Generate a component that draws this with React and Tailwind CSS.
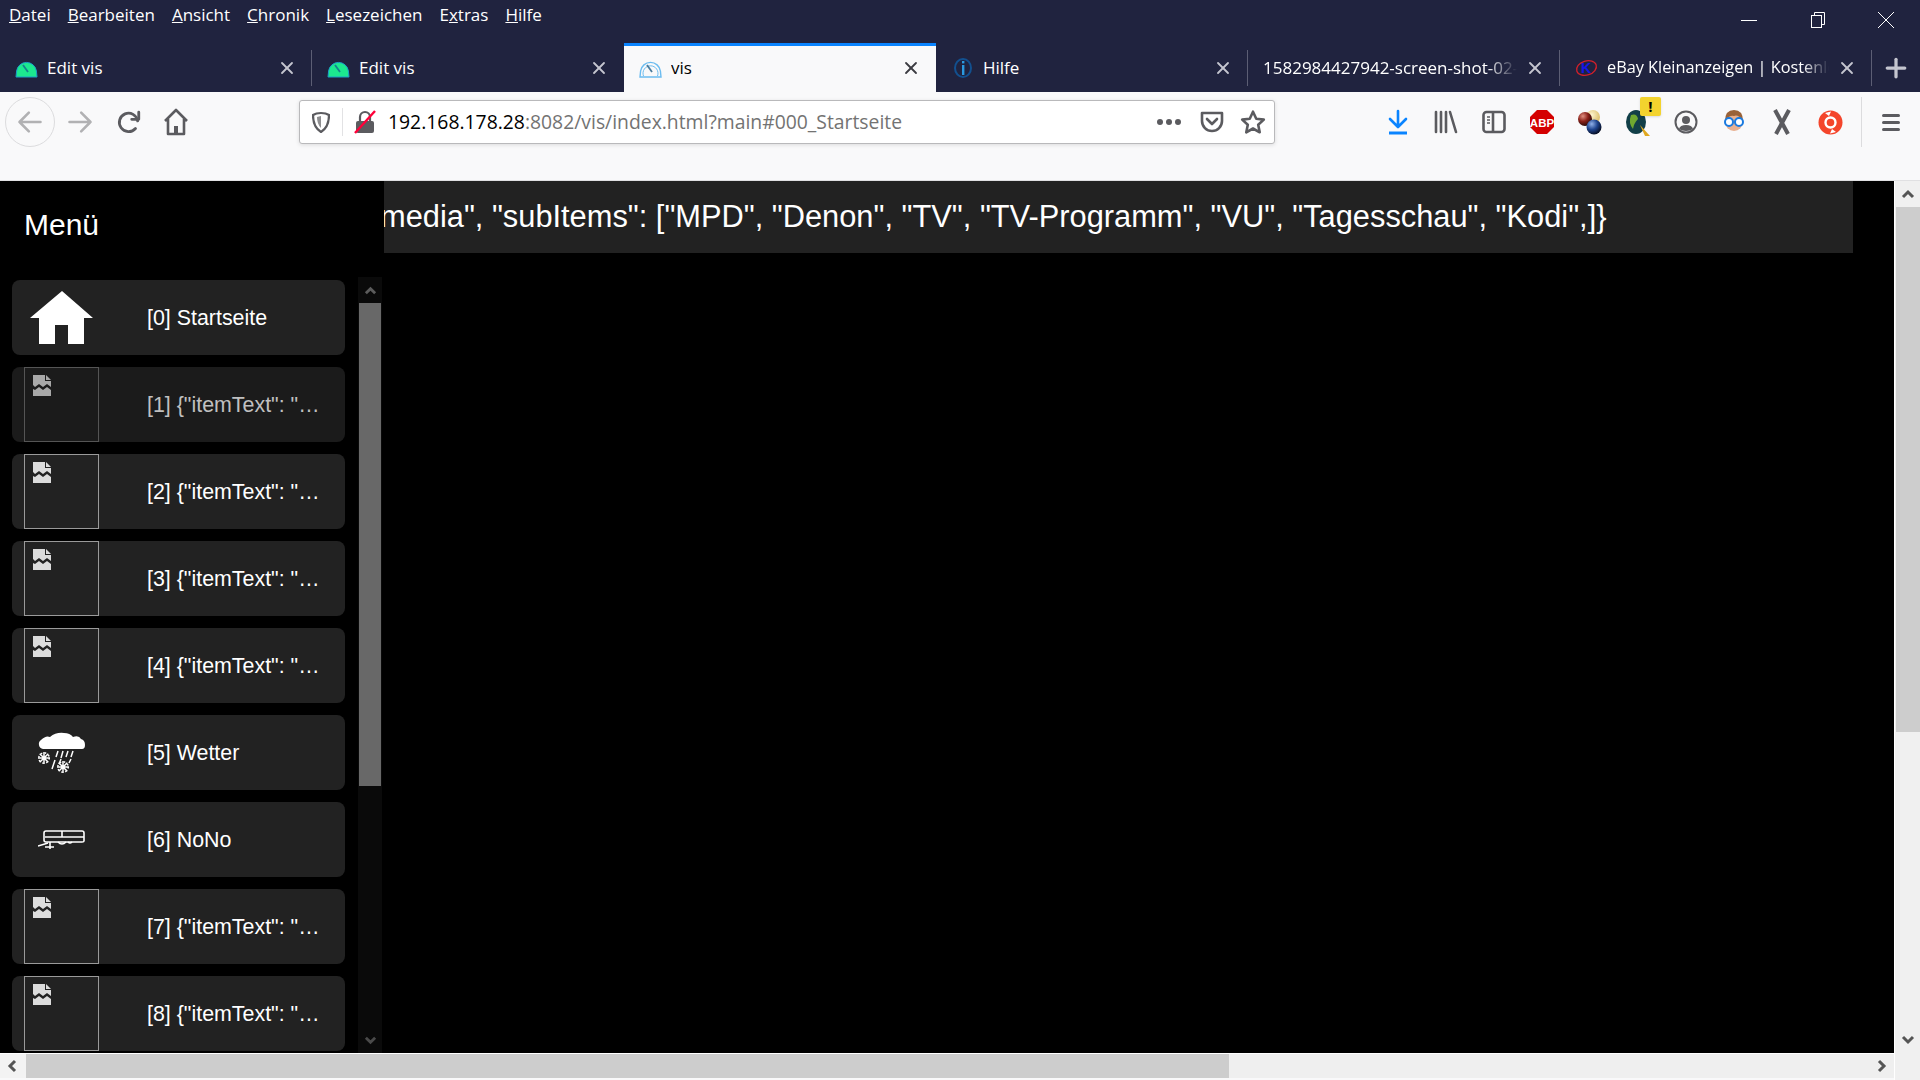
import { X, Plus } from 'lucide-react';

const uiFont = 'font-["Open_Sans",sans-serif]';
const pageFont = 'font-["Liberation_Sans",Arial,sans-serif]';

const menuItems = [
    ['D', 'atei', ''],
    ['B', 'earbeiten', ''],
    ['A', 'nsicht', ''],
    ['C', 'hronik', ''],
    ['L', 'esezeichen', ''],
    ['E', 'xtras', 'x'],
    ['H', 'ilfe', ''],
];

const Gauge = ({ color = '#1ce88f', line = '#1b9fc8', outline = false }) => (
    <svg width="23" height="20" viewBox="0 0 23 20">
        <path
            d="M1 19 L1.6 13 A10 10 0 0 1 21.4 13 L22 19 Z"
            fill={outline ? 'none' : color}
            stroke={outline ? color : line}
            strokeWidth={outline ? 1.4 : 1}
        />
        {outline && <path d="M4.5 18 A7.5 7.5 0 1 1 18.5 18" fill="none" stroke={color} strokeWidth="1" />}
        <path d="M8 7 L13 14" stroke={outline ? '#4a7a9a' : '#16808f'} strokeWidth="1.8" />
    </svg>
);

const InfoFavicon = () => (
    <svg width="20" height="22" viewBox="0 0 20 22">
        <ellipse cx="10" cy="11" rx="8" ry="9" fill="none" stroke="#12508f" strokeWidth="2" />
        <rect x="9" y="8" width="2.4" height="10" fill="#2a9ae0" />
        <rect x="9" y="4" width="2.4" height="2.4" fill="#2a9ae0" />
    </svg>
);

const EbayFavicon = () => (
    <svg width="26" height="24" viewBox="0 0 26 24">
        <ellipse cx="13" cy="12" rx="11.5" ry="8" transform="rotate(-18 13 12)" fill="none" stroke="#d3202a" strokeWidth="1.5" />
        <text x="12.5" y="18" textAnchor="middle" fontSize="16" fontWeight="700" fontFamily="Liberation Sans" fill="#1616e6">K</text>
    </svg>
);

const tabs = [
    { title: 'Edit vis', icon: <Gauge />, sep: true },
    { title: 'Edit vis', icon: <Gauge />, sep: false },
    { title: 'vis', icon: <Gauge outline color="#6bbcf0" />, active: true, sep: false },
    { title: 'Hilfe', icon: <InfoFavicon />, sep: true },
    { title: '1582984427942-screen-shot-02-29-at-16', sep: true, fade: true },
    { title: 'eBay Kleinanzeigen | Kostenlos', icon: <EbayFavicon />, sep: true, fade: true, small: true },
];

const Tab = ({ title, icon, active, sep, fade, small }) => (
    <div
        className={`relative flex h-[49px] w-[312px] shrink-0 items-center pl-[15px] pr-[15px] ${
            active ? 'border-t-[3px] border-[#0a84ff] bg-[#f9f9fa] pb-[3px] text-black' : 'text-white'
        }`}
    >
        {icon && <div className="mr-[9px] flex w-[23px] shrink-0 justify-center">{icon}</div>}
        <div
            className={`min-w-0 flex-1 overflow-hidden whitespace-nowrap ${small ? 'text-[16.3px]' : 'text-[17px]'} ${
                fade ? '[mask-image:linear-gradient(to_right,black_88%,transparent)]' : ''
            }`}
        >
            {title}
        </div>
        <X size={20} strokeWidth={2.2} className={`ml-2 shrink-0 ${active ? 'text-[#3c3c42]' : 'text-[#c4c5cf]'}`} />
        {sep && <div className="absolute right-0 top-[7px] h-[36px] w-px bg-[#5c5e74]" />}
    </div>
);

const Stroke = ({ children, size = 24, box = 24, color = '#5b5b5f', width = 2 }) => (
    <svg width={size} height={size} viewBox={`0 0 ${box} ${box}`} fill="none" stroke={color} strokeWidth={width} strokeLinecap="round" strokeLinejoin="round">
        {children}
    </svg>
);

const ToolSlot = ({ children }) => <div className="flex h-[50px] w-12 items-center justify-center">{children}</div>;

const BrokenImage = ({ dim }) => (
    <svg width="19" height="22" viewBox="0 0 19 22" className="absolute left-[8px] top-[7px]" fill={dim ? '#a8a8a8' : '#dcdcdc'}>
        <path d="M0 0 H12 V6 H18 V12 L14 9 L10 12 L6 9 L2 12 L0 10 Z" />
        <path d="M13 0 L18 5 H13 Z" />
        <path d="M0 14 L2 15 L6 12 L10 15 L14 12 L18 15 V21 H0 Z" />
    </svg>
);

const HouseIcon = () => (
    <svg width="64" height="54" viewBox="0 0 64 54">
        <path d="M32 0 L63 27 H54 V53 H38 V34 H25 V53 H9 V27 H0 Z" fill="white" />
    </svg>
);

const Snowflake = ({ x, y }) => (
    <g transform={`translate(${x} ${y})`}>
        <path d="M-6 0 H6 M0 -6 V6 M-4.3 -4.3 L4.3 4.3 M-4.3 4.3 L4.3 -4.3" />
        <circle r="5.2" strokeDasharray="1.6 2.5" />
    </g>
);

const WeatherIcon = () => (
    <svg width="48" height="42" viewBox="0 0 48 42" fill="white">
        <path d="M5 17 A5 5 0 0 1 3 8 Q8 3 12 5 Q18 0 26 1 Q32 1 35 5 Q41 3 43 7 Q47 8 47 13 Q47 17 44 17 Z" />
        <g stroke="white" strokeWidth="1.5" fill="none">
            <path d="M20 19 L18 25 M25 19 L23 26 M30 19 L28 25 M35 19 L33 25 M33 27 L31 31 M17 28 L14 37 M23 27 L21 32" />
            <Snowflake x={6} y={26} />
            <Snowflake x={25} y={35} />
        </g>
    </svg>
);

const TrailerIcon = () => (
    <svg width="48" height="20" viewBox="0 0 48 20" fill="none" stroke="white" strokeWidth="1.6">
        <path d="M8 1 H44 Q46 1 46 3 V11 Q46 12 44 12 H8 Q6 12 6 10 V3 Q6 1 8 1 Z" />
        <path d="M7 7 H24 M24 1 V7 M24 7 H46" />
        <path d="M0 16 L10 13 M12 12 V19 M7 17 H16 M20 12 Q24 16 28 12 M30 12 Q32 14 34 12" />
    </svg>
);

const rows = [
    { label: '[0] Startseite', icon: <HouseIcon /> },
    { label: '[1] {"itemText": "…', dim: true },
    { label: '[2] {"itemText": "…' },
    { label: '[3] {"itemText": "…' },
    { label: '[4] {"itemText": "…' },
    { label: '[5] Wetter', icon: <WeatherIcon /> },
    { label: '[6] NoNo', icon: <TrailerIcon /> },
    { label: '[7] {"itemText": "…' },
    { label: '[8] {"itemText": "…' },
];

const MenuRow = ({ label, icon, dim }) => (
    <div className={`flex h-[75px] shrink-0 items-center rounded-lg pl-3 ${dim ? 'bg-[#1b1b1b] text-[#c0c0c0]' : 'bg-[#222222] text-white'}`}>
        {icon ? (
            <div className="flex h-[75px] w-[75px] items-center justify-center">{icon}</div>
        ) : (
            <div className={`relative h-[75px] w-[75px] border ${dim ? 'border-[#555555]' : 'border-[#9a9a9a]'}`}>
                <BrokenImage dim={dim} />
            </div>
        )}
        <span className="ml-12 whitespace-nowrap pt-[2px] text-[21.4px]">{label}</span>
    </div>
);

const Chevron = ({ dir, className = '', color = '#555555', size = 14 }) => {
    const points = {
        up: '2,10 7,5 12,10',
        down: '2,4 7,9 12,4',
        left: '9,2 4,7 9,12',
        right: '5,2 10,7 5,12',
    }[dir];
    return (
        <svg width={size} height={size} viewBox="0 0 14 14" fill="none" stroke={color} strokeWidth="3" className={className}>
            <polyline points={points} />
        </svg>
    );
};

const App = () => {
    return (
        <div className={`flex h-screen w-screen flex-col overflow-hidden bg-[#f9f9fa] ${uiFont}`}>
            {/* title bar and tabs */}
            <div className="flex h-[92px] shrink-0 flex-col bg-[#20233f]">
                <div className="flex h-[43px] items-start text-white">
                    <div className="flex pl-[9px] pt-[3px] text-[17px] leading-6">
                        {menuItems.map(([first, rest, mark], i) => (
                            <span key={first} className={i === 6 ? '' : 'mr-[17px]'}>
                                {mark ? (
                                    <>
                                        {first}
                                        <u>{mark}</u>
                                        {rest.slice(1)}
                                    </>
                                ) : (
                                    <>
                                        <u>{first}</u>
                                        {rest}
                                    </>
                                )}
                            </span>
                        ))}
                    </div>
                    <div className="ml-auto flex h-10 items-center">
                        <div className="flex w-[69px] justify-center">
                            <div className="h-px w-4 bg-white" />
                        </div>
                        <div className="flex w-[69px] justify-center">
                            <svg width="14" height="16" viewBox="0 0 14 16" fill="none" stroke="white" strokeWidth="1">
                                <rect x="0.5" y="3.5" width="10" height="12" />
                                <path d="M3.5 3.5 V0.5 H13.5 V12.5 H10.5" />
                            </svg>
                        </div>
                        <div className="flex w-[68px] justify-center">
                            <svg width="18" height="18" viewBox="0 0 18 18" stroke="white" strokeWidth="1">
                                <path d="M1 1 L17 17 M17 1 L1 17" />
                            </svg>
                        </div>
                    </div>
                </div>
                <div className="flex items-start">
                    {tabs.map((tab, i) => (
                        <Tab key={i} {...tab} />
                    ))}
                    <div className="flex h-[49px] flex-1 items-center justify-center">
                        <Plus size={30} strokeWidth={2.6} className="text-[#c4c5cf]" />
                    </div>
                </div>
            </div>

            {/* toolbar */}
            <div className="flex h-[89px] shrink-0 items-start border-b border-[#e0e0e2] bg-[#f9f9fa] pt-[5px]">
                <div className="ml-[5px] flex h-[50px] w-[50px] items-center justify-center rounded-full border border-[#dcdcde]">
                    <Stroke size={28} color="#b1b1b3" width={2.2}>
                        <path d="M21 12 H3 M11 4 L3 12 L11 20" />
                    </Stroke>
                </div>
                <div className="flex h-[50px] w-[50px] items-center justify-center">
                    <Stroke size={28} color="#b1b1b3" width={2.2}>
                        <path d="M3 12 H21 M13 4 L21 12 L13 20" />
                    </Stroke>
                </div>
                <div className="flex h-[50px] w-[47px] items-center justify-center">
                    <Stroke size={26} width={2.6}>
                        <path d="M20 11 A8.5 8.5 0 1 0 18 18" />
                        <path d="M21 3 V9.5 H14.5" />
                    </Stroke>
                </div>
                <div className="flex h-[50px] w-12 items-center justify-center">
                    <svg width="26" height="28" viewBox="0 0 26 28" fill="none" stroke="#5b5b5f" strokeWidth="2.6" strokeLinejoin="round">
                        <path d="M2 13 L13 2 L24 13 M5 11 V26 H21 V11" />
                        <rect x="11" y="18" width="4" height="8" fill="#5b5b5f" stroke="none" />
                    </svg>
                </div>
                {/* address bar */}
                <div className="ml-[99px] mt-[3px] flex h-[44px] w-[976px] items-center rounded-[3px] border border-[#b9b9bb] bg-white shadow-[0_1px_4px_rgba(0,0,0,0.12)]">
                    <div className="flex h-full w-[42px] items-center justify-center">
                        <svg width="18" height="22" viewBox="0 0 18 22" fill="none">
                            <path d="M9 2 Q14 2 17 4 Q17 16 9 21 Q1 16 1 4 Q4 2 9 2 Z" stroke="#5b5b5f" strokeWidth="2.2" />
                            <path d="M9 5 V17 Q5 13 5 6 Z" fill="#8e8e90" />
                        </svg>
                    </div>
                    <div className="h-[28px] w-px bg-[#e2e2e4]" />
                    <div className="flex w-[43px] justify-center">
                        <svg width="22" height="24" viewBox="0 0 22 24" fill="none">
                            <path d="M6 11 V7 A5 5 0 0 1 16 7 V11" stroke="#5b5b5f" strokeWidth="2.2" />
                            <rect x="2" y="11" width="18" height="12" rx="2" fill="#5b5b5f" />
                            <path d="M1 23 L21 1" stroke="#ff0039" strokeWidth="2.4" />
                        </svg>
                    </div>
                    <div className="ml-[2px] whitespace-nowrap text-[19.35px]">
                        <span className="text-black">192.168.178.28</span>
                        <span className="text-[#737373]">:8082/vis/index.html?main#000_Startseite</span>
                    </div>
                    <div className="ml-auto flex items-center">
                        <div className="flex w-[44px] justify-center gap-[3px]">
                            <span className="h-[6px] w-[6px] rounded-full bg-[#5b5b5f]" />
                            <span className="h-[6px] w-[6px] rounded-full bg-[#5b5b5f]" />
                            <span className="h-[6px] w-[6px] rounded-full bg-[#5b5b5f]" />
                        </div>
                        <div className="flex w-[41px] justify-center">
                            <svg width="24" height="24" viewBox="0 0 24 24" fill="none" stroke="#5b5b5f" strokeWidth="2.6" strokeLinejoin="round">
                                <path d="M2 3 H22 V11 A10 10 0 0 1 2 11 Z" />
                                <path d="M7 9 L12 14 L17 9" strokeLinecap="round" />
                            </svg>
                        </div>
                        <div className="flex w-[42px] justify-center">
                            <svg width="26" height="26" viewBox="0 0 24 24" fill="none" stroke="#5b5b5f" strokeWidth="2.4" strokeLinejoin="round">
                                <path d="M12 2.5 L15 9 L22 9.8 L16.8 14.5 L18.2 21.5 L12 18 L5.8 21.5 L7.2 14.5 L2 9.8 L9 9 Z" />
                            </svg>
                        </div>
                    </div>
                </div>

                {/* extensions */}
                <div className="ml-auto flex items-center">
                    <ToolSlot>
                        <svg width="20" height="26" viewBox="0 0 20 26" fill="none" stroke="#0a84ff" strokeWidth="2.6" strokeLinecap="round" strokeLinejoin="round">
                            <path d="M10 2 V17 M2 10 L10 18 L18 10" />
                            <path d="M1 24 H19" strokeWidth="3" strokeLinecap="butt" />
                        </svg>
                    </ToolSlot>
                    <ToolSlot>
                        <svg width="24" height="24" viewBox="0 0 24 24" fill="none" stroke="#5b5b5f" strokeWidth="2.6" strokeLinecap="round">
                            <path d="M2 2 V22 M7 2 V22 M12 2 V22 M16 2 L22 22" />
                        </svg>
                    </ToolSlot>
                    <ToolSlot>
                        <svg width="24" height="24" viewBox="0 0 24 24" fill="none" stroke="#5b5b5f" strokeWidth="2.6">
                            <rect x="1.5" y="2" width="21" height="20" rx="3" />
                            <path d="M11 2 V22" />
                            <path d="M5 7 H8 M5 10 H8 M5 13 H8" strokeWidth="1.6" />
                        </svg>
                    </ToolSlot>
                    <ToolSlot>
                        <svg width="26" height="26" viewBox="0 0 26 26">
                            <path d="M8 1 H18 L25 8 V18 L18 25 H8 L1 18 V8 Z" fill="#d40000" />
                            <text x="13" y="17.5" textAnchor="middle" fontSize="11.5" fontWeight="700" fontFamily="Liberation Sans" fill="white">ABP</text>
                        </svg>
                    </ToolSlot>
                    <ToolSlot>
                        <svg width="26" height="26" viewBox="0 0 26 26">
                            <defs>
                                <radialGradient id="ballY" cx="0.4" cy="0.35" r="0.7">
                                    <stop offset="0" stopColor="#fff6d0" />
                                    <stop offset="1" stopColor="#d8b860" />
                                </radialGradient>
                                <radialGradient id="ballR" cx="0.35" cy="0.3" r="0.75">
                                    <stop offset="0" stopColor="#e09080" />
                                    <stop offset="0.5" stopColor="#8a2018" />
                                    <stop offset="1" stopColor="#200808" />
                                </radialGradient>
                                <radialGradient id="ballB" cx="0.35" cy="0.3" r="0.75">
                                    <stop offset="0" stopColor="#90b0e8" />
                                    <stop offset="0.5" stopColor="#1f4590" />
                                    <stop offset="1" stopColor="#040818" />
                                </radialGradient>
                            </defs>
                            <circle cx="16" cy="8" r="7" fill="url(#ballY)" />
                            <circle cx="8" cy="10" r="7" fill="url(#ballR)" />
                            <circle cx="17" cy="18" r="7.5" fill="url(#ballB)" />
                        </svg>
                    </ToolSlot>
                    <ToolSlot>
                        <div className="relative h-[26px] w-[26px]">
                            <svg width="26" height="28" viewBox="0 0 26 28">
                                <ellipse cx="11" cy="13" rx="10" ry="12" fill="#123f48" />
                                <path d="M6 6 Q12 4 13 10 Q9 14 8 20 Q3 14 6 6 Z" fill="#6fa830" />
                                <path d="M15 16 L20 27 L25 27 Z" fill="#e0a820" />
                            </svg>
                            <div className="absolute -right-[10px] -top-[12px] flex h-[19px] w-[21px] items-center justify-center rounded-[2px] bg-[#f3d32e] text-[15px] font-bold leading-none text-black shadow-sm">
                                !
                            </div>
                        </div>
                    </ToolSlot>
                    <ToolSlot>
                        <svg width="24" height="24" viewBox="0 0 24 24" fill="none" stroke="#5b5b5f" strokeWidth="2">
                            <circle cx="12" cy="12" r="10.5" />
                            <circle cx="12" cy="10" r="4" fill="#5b5b5f" stroke="none" />
                            <path d="M5 19 Q6 15 12 15 Q18 15 19 19 Q16 21 12 21 Q8 21 5 19 Z" fill="#5b5b5f" stroke="none" />
                        </svg>
                    </ToolSlot>
                    <ToolSlot>
                        <svg width="24" height="28" viewBox="0 0 24 28">
                            <circle cx="12" cy="14" r="9" fill="#e8b090" />
                            <path d="M3 13 Q3 2 12 2 Q21 2 21 13 Q16 6 12 8 Q7 7 3 13 Z" fill="#9a6238" />
                            <circle cx="7" cy="14" r="4" fill="white" stroke="#1a7ae0" strokeWidth="2" />
                            <circle cx="17" cy="14" r="4" fill="white" stroke="#1a7ae0" strokeWidth="2" />
                        </svg>
                    </ToolSlot>
                    <ToolSlot>
                        <svg width="20" height="26" viewBox="0 0 20 26" fill="none" stroke="#5b5b5f" strokeWidth="4">
                            <path d="M3 1 L16 25 M17 1 L4 25" />
                        </svg>
                    </ToolSlot>
                    <ToolSlot>
                        <svg width="25" height="25" viewBox="0 0 25 25">
                            <circle cx="12.5" cy="12.5" r="12" fill="#f4452b" />
                            <circle cx="12.5" cy="12.5" r="5" fill="none" stroke="white" strokeWidth="2.4" />
                            <path d="M7 3 L13 1.5 L11 6 Z M18 22 L12 23.5 L14 19 Z" fill="white" />
                        </svg>
                    </ToolSlot>
                    <div className="ml-[7px] h-[50px] w-px bg-[#dcdcde]" />
                    <div className="flex h-[50px] w-[58px] items-center justify-center">
                        <div className="flex w-[18px] flex-col gap-[4px]">
                            <span className="h-[3px] rounded-full bg-[#5b5b5f]" />
                            <span className="h-[3px] rounded-full bg-[#5b5b5f]" />
                            <span className="h-[3px] rounded-full bg-[#5b5b5f]" />
                        </div>
                    </div>
                </div>
            </div>

            {/* page area */}
            <div className="flex min-h-0 flex-1">
                <div className="flex min-w-0 flex-1 flex-col">
                    <div className={`flex h-[872px] shrink-0 overflow-hidden bg-black text-white ${pageFont}`}>
                        <aside className="flex w-[384px] shrink-0 flex-col">
                            <div className="flex h-[99px] shrink-0 items-start pl-6 pt-[25px] text-[30px] leading-[38px]">Menü</div>
                            <div className="flex min-h-0 flex-1">
                                <div className="ml-3 flex w-[333px] flex-col gap-3">
                                    {rows.map((row) => (
                                        <MenuRow key={row.label} {...row} />
                                    ))}
                                </div>
                                <div className="-mt-[3px] ml-[13px] flex w-6 flex-col items-center bg-[#0a0a0a]">
                                    <div className="flex h-[26px] w-full shrink-0 items-center justify-center">
                                        <Chevron dir="up" size={13} color="#5c5c5c" />
                                    </div>
                                    <div className="h-[483px] w-[22px] bg-[#686868]" />
                                    <div className="flex flex-1 items-end pb-[6px]">
                                        <Chevron dir="down" size={13} color="#4a4a4a" />
                                    </div>
                                </div>
                            </div>
                        </aside>
                        <div className="min-w-0 flex-1">
                            <div className="flex h-[72px] w-[1469px] items-center overflow-hidden whitespace-nowrap bg-[#222222] pt-[1px] text-[30.8px]">
                                <span className="-ml-[4px]">media", "subItems": ["MPD", "Denon", "TV", "TV-Programm", "VU", "Tagesschau", "Kodi",]{'}'}</span>
                            </div>
                        </div>
                    </div>
                    <div className="flex h-[25px] shrink-0 border-t border-white bg-[#efefef]">
                        <div className="flex w-[26px] shrink-0 items-center justify-center bg-[#f3f3f3]">
                            <Chevron dir="left" />
                        </div>
                        <div className="w-[1203px] shrink-0 bg-[#cdcdcd]" />
                        <div className="flex flex-1 items-center justify-end pr-[6px]">
                            <Chevron dir="right" />
                        </div>
                    </div>
                </div>
                <div className="flex w-[26px] shrink-0 flex-col items-center border-l border-white bg-[#f0f0f0] pb-[28px]">
                    <div className="flex h-[26px] w-full shrink-0 items-center justify-center">
                        <Chevron dir="up" />
                    </div>
                    <div className="h-[525px] w-6 bg-[#cdcdcd]" />
                    <div className="flex flex-1 items-end pb-[5px]">
                        <Chevron dir="down" />
                    </div>
                </div>
            </div>
        </div>
    );
};

export default App;
